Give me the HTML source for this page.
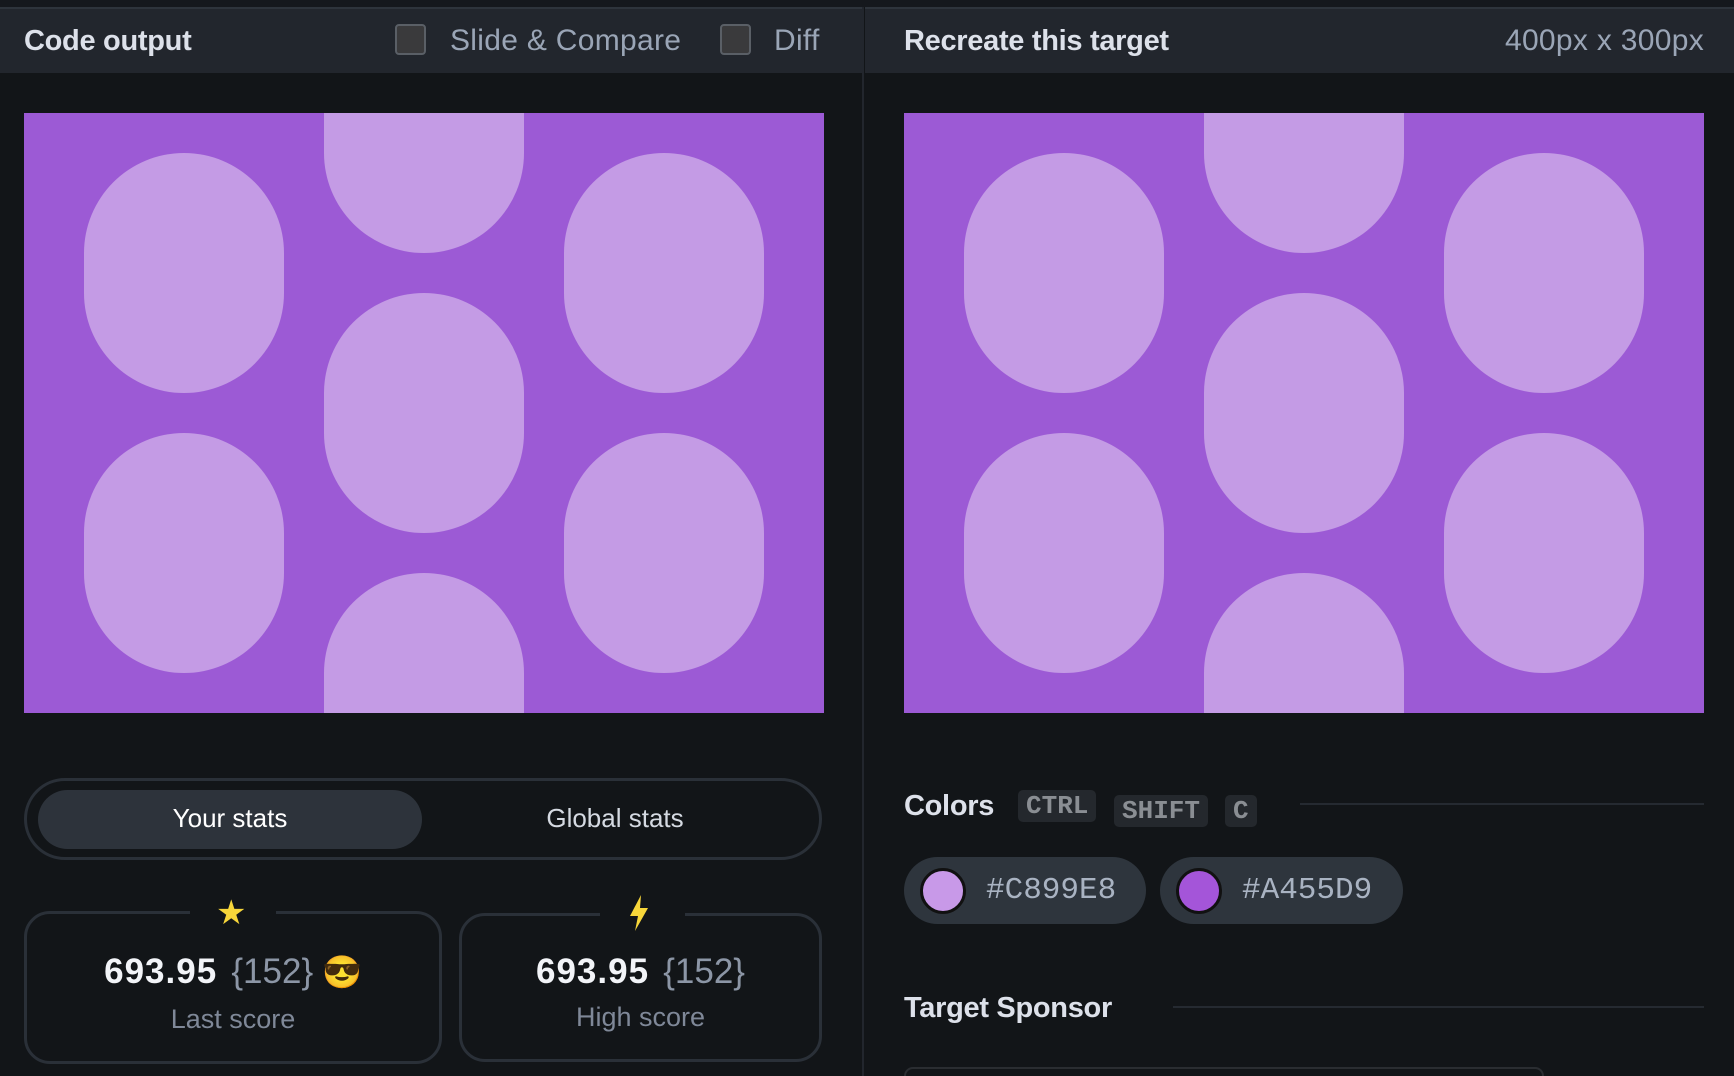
<!DOCTYPE html>
<html style="overflow:hidden;width:1734px;height:1076px"><head><meta charset="utf-8"><style>
*{margin:0;padding:0;box-sizing:border-box}
body{width:1734px;height:1076px;background:#121518;font-family:"Liberation Sans",sans-serif;position:relative;overflow:hidden}
.abs{position:absolute}
.hdr{top:7px;height:66px;background:#22262d;border-top:2px solid #2e343c}
.t{color:#dde1ea;font-weight:bold;font-size:29px;letter-spacing:-0.3px}
.g{color:#9aa5b6;font-size:30px;letter-spacing:0.3px}
.cb{width:31px;height:31px;border:2px solid #5a5f66;background:#3a3a3c;border-radius:4px}
.canvas{width:800px;height:600px;background:#9C5AD5;overflow:hidden;top:113px}
.s{position:absolute;width:200px;height:240px;border-radius:100px;background:#C49BE5}
.card{border:3px solid #2a3038;border-radius:26px}
.num{color:#f2f4f8;font-weight:bold;font-size:35px;letter-spacing:1px}
.br{color:#8c96a6;font-size:35px}
.lbl{color:#7f8898;font-size:27px;text-align:center}
.kbd{background:#24282d;color:#8a8e93;font-family:"Liberation Mono",monospace;font-weight:bold;font-size:26px;border-radius:5px;padding:0 8px;height:32px;line-height:32px}
.pill{background:#2e353d;border-radius:34px;height:67px}
.hex{color:#a9b3c2;font-family:"Liberation Mono",monospace;font-size:31px}
.line{height:2px;background:#252a31}
</style></head><body>
<div class="abs" style="top:0;left:0;width:1734px;height:7px;background:#15181d"></div>
<div class="abs hdr" style="left:0;width:863px"></div>
<div class="abs hdr" style="left:865px;width:869px"></div>
<div class="abs" style="left:862px;top:7px;width:2px;height:1069px;background:#22262d"></div>
<div class="abs t" style="left:24px;top:25px">Code output</div>
<div class="abs cb" style="left:395px;top:24px"></div>
<div class="abs g" style="left:450px;top:24px">Slide &amp; Compare</div>
<div class="abs cb" style="left:720px;top:24px"></div>
<div class="abs g" style="left:774px;top:24px">Diff</div>
<div class="abs t" style="left:904px;top:25px">Recreate this target</div>
<div class="abs g" style="right:30px;top:24px">400px x 300px</div>

<div class="abs canvas" style="left:24px">
<div class="s" style="left:60px;top:40px"></div><div class="s" style="left:60px;top:320px"></div>
<div class="s" style="left:300px;top:-100px"></div><div class="s" style="left:300px;top:180px"></div><div class="s" style="left:300px;top:460px"></div>
<div class="s" style="left:540px;top:40px"></div><div class="s" style="left:540px;top:320px"></div>
</div>
<div class="abs canvas" style="left:904px">
<div class="s" style="left:60px;top:40px"></div><div class="s" style="left:60px;top:320px"></div>
<div class="s" style="left:300px;top:-100px"></div><div class="s" style="left:300px;top:180px"></div><div class="s" style="left:300px;top:460px"></div>
<div class="s" style="left:540px;top:40px"></div><div class="s" style="left:540px;top:320px"></div>
</div>

<div class="abs" style="left:24px;top:778px;width:798px;height:82px;border:3px solid #2a3038;border-radius:41px"></div>
<div class="abs" style="left:38px;top:790px;width:384px;height:59px;border-radius:30px;background:#2d333b"></div>
<div class="abs" style="left:38px;top:803px;width:384px;text-align:center;color:#fff;font-size:26px">Your stats</div>
<div class="abs" style="left:422px;top:803px;width:386px;text-align:center;color:#d5dae2;font-size:26px">Global stats</div>

<div class="abs card" style="left:24px;top:911px;width:418px;height:153px"></div>
<div class="abs" style="left:190px;top:905px;width:86px;height:12px;background:#121518"></div>
<div class="abs" style="left:216px;top:893px;color:#f7d63a;font-size:34px">★</div>
<div class="abs" style="left:24px;top:952px;width:418px;text-align:center"><span class="num">693.95</span> <span class="br">&nbsp;{152}</span>&nbsp; <span style="font-size:32px">😎</span></div>
<div class="abs lbl" style="left:24px;top:1004px;width:418px">Last score</div>

<div class="abs card" style="left:459px;top:913px;width:363px;height:149px"></div>
<div class="abs" style="left:600px;top:905px;width:85px;height:12px;background:#121518"></div>
<svg class="abs" style="left:628px;top:895px" width="22" height="36" viewBox="0 0 22 36"><path d="M13 0 L2 21 H10 L7 36 L20 13 H12 Z" fill="#f7d63a"/></svg>
<div class="abs" style="left:459px;top:952px;width:363px;text-align:center"><span class="num">693.95</span> <span class="br">&nbsp;{152}</span></div>
<div class="abs lbl" style="left:459px;top:1002px;width:363px">High score</div>

<div class="abs t" style="left:904px;top:790px">Colors</div>
<div class="abs kbd" style="left:1018px;top:790px">CTRL</div>
<div class="abs kbd" style="left:1114px;top:795px">SHIFT</div>
<div class="abs kbd" style="left:1225px;top:795px">C</div>
<div class="abs line" style="left:1300px;top:803px;width:404px"></div>

<div class="abs pill" style="left:904px;top:857px;width:242px"></div>
<div class="abs" style="left:920px;top:868px;width:46px;height:46px;border-radius:50%;border:3px solid #111;background:#C899E8"></div>
<div class="abs hex" style="left:986px;top:873px">#C899E8</div>
<div class="abs pill" style="left:1160px;top:857px;width:243px"></div>
<div class="abs" style="left:1176px;top:868px;width:46px;height:46px;border-radius:50%;border:3px solid #111;background:#A455D9"></div>
<div class="abs hex" style="left:1242px;top:873px">#A455D9</div>

<div class="abs t" style="left:904px;top:992px">Target Sponsor</div>
<div class="abs line" style="left:1173px;top:1006px;width:531px"></div>
<div class="abs" style="left:904px;top:1067px;width:640px;height:9px;border:2px solid #2a2d31;border-bottom:none;border-radius:12px 12px 0 0"></div>
</body></html>
